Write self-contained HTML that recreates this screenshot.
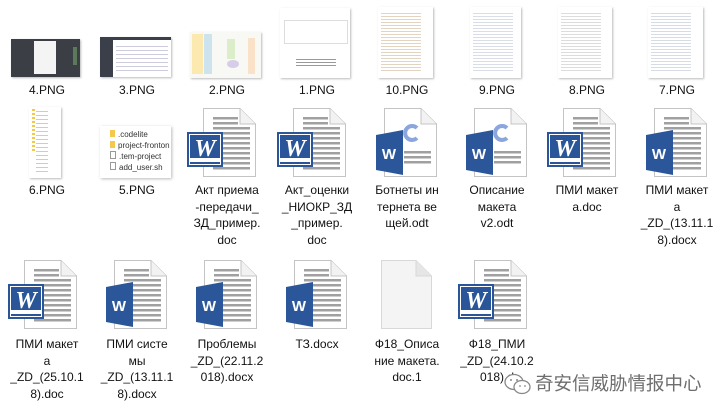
<!DOCTYPE html>
<html><head><meta charset="utf-8"><style>
body{margin:0;width:722px;height:414px;background:#fff;position:relative;overflow:hidden;font-family:"Liberation Sans","Noto Sans CJK SC",sans-serif;}
.l{position:absolute;width:92px;text-align:center;font-size:12px;line-height:16.5px;color:#111;}
.a{position:absolute;}
svg.i{position:absolute;overflow:visible;}
</style></head><body>
<svg width="0" height="0" style="position:absolute">
<defs>
<g id="paper"><path d="M0.5,0.5H37L52.5,16V68.5H0.5Z" fill="#fff" stroke="#c4c4c4"/><path d="M37,0.5V16H52.5" fill="#f2f2f2" stroke="#c4c4c4"/></g>
<g id="lines" fill="#a0a0a0"><rect x="10" y="9" width="25" height="2.5"/><rect x="10" y="14" width="25" height="2.5"/><rect x="10" y="19" width="37" height="2.5"/><rect x="10" y="24" width="37" height="2.5"/><rect x="10" y="29" width="37" height="2.5"/><rect x="10" y="34" width="37" height="2.5"/><rect x="10" y="39" width="37" height="2.5"/><rect x="10" y="44" width="37" height="2.5"/><rect x="10" y="49" width="37" height="2.5"/><rect x="10" y="54" width="37" height="2.5"/><rect x="10" y="59" width="37" height="2.5"/></g>
<g id="doc"><use href="#paper"/><use href="#lines"/><rect x="-16" y="24" width="36" height="35" fill="#2a5699"/><rect x="-13.5" y="26.5" width="31" height="30" fill="none" stroke="#fff" stroke-width="1"/><rect x="-13" y="50" width="30" height="4" fill="#fff"/><text x="2" y="48" fill="#fff" font-family="Liberation Serif,serif" font-weight="bold" font-style="italic" font-size="24" text-anchor="middle">W</text></g>
<g id="docx"><use href="#paper"/><use href="#lines"/><path d="M-8,27L19,22V67L-8,62Z" fill="#2b579a"/><text x="5" y="51" fill="#fff" font-family="Liberation Sans,sans-serif" font-weight="bold" font-size="15" text-anchor="middle">W</text></g>
<g id="odt"><use href="#paper"/><g fill="#a0a0a0"><rect x="20" y="43" width="27" height="2.5"/><rect x="20" y="48" width="27" height="2.5"/><rect x="20" y="53" width="27" height="2.5"/></g><path d="M33,20A7,7 0 1 0 33,30" fill="none" stroke="#8aa6dd" stroke-width="4"/><path d="M-8,27L19,22V67L-8,62Z" fill="#2b579a"/><text x="5" y="51" fill="#fff" font-family="Liberation Sans,sans-serif" font-weight="bold" font-size="15" text-anchor="middle">W</text></g>
</defs></svg>

<div class="a" style="left:11px;top:39px;width:69px;height:38px;background:#3b3f45;box-shadow:1px 1px 2px #bbb"><div style="position:absolute;left:23px;top:2px;width:22px;height:33px;background:#f4f4f4"></div><div style="position:absolute;left:62px;top:8px;width:4px;height:18px;background:#5a7a5a"></div></div>
<div class="a" style="left:100px;top:37px;width:71px;height:40px;background:#fff;box-shadow:1px 1px 2px #bbb"><div style="position:absolute;left:0;top:0;width:13px;height:40px;background:#3a3f4a"></div><div style="position:absolute;left:13px;top:0;width:58px;height:3px;background:#3a3f4a"></div><div style="position:absolute;left:16px;top:6px;width:52px;height:28px;background:repeating-linear-gradient(#fff 0 3px,#ccd 3px 4px)"></div></div>
<div class="a" style="left:190px;top:32px;width:71px;height:46px;background:#f8f8f4;box-shadow:1px 1px 2px #bbb"><div style="position:absolute;left:2px;top:2px;width:11px;height:40px;background:#fbe9b0"></div><div style="position:absolute;left:14px;top:2px;width:8px;height:40px;background:#cde4ef"></div><div style="position:absolute;left:58px;top:6px;width:7px;height:36px;background:#fae2c8"></div><div style="position:absolute;left:37px;top:7px;width:8px;height:20px;background:#dbeec9"></div><div style="position:absolute;left:37px;top:28px;width:12px;height:8px;border-radius:50%;background:#d8cde8"></div></div>
<div class="a" style="left:280px;top:8px;width:70px;height:70px;background:#fff;box-shadow:1px 1px 2px #bbb"><div style="position:absolute;left:4px;top:12px;width:62px;height:22px;border:1px solid #ddd"></div><div style="position:absolute;left:16px;top:50px;width:40px;height:8px;background:repeating-linear-gradient(#fff 0 1px,#999 1px 2px,#fff 2px 3px)"></div></div>
<div class="a" style="left:378px;top:7px;width:55px;height:71px;background:#fff;box-shadow:1px 1px 2px #bbb"><div style="position:absolute;left:3px;top:4px;width:40px;height:62px;background:repeating-linear-gradient(#fff 0 2px,#e2d4c0 2px 3px)"></div></div>
<div class="a" style="left:470px;top:7px;width:51px;height:71px;background:#fff;box-shadow:1px 1px 2px #bbb"><div style="position:absolute;left:3px;top:4px;width:40px;height:62px;background:repeating-linear-gradient(#fff 0 2px,#d8dde8 2px 3px)"></div></div>
<div class="a" style="left:558px;top:7px;width:54px;height:71px;background:#fff;box-shadow:1px 1px 2px #bbb"><div style="position:absolute;left:3px;top:4px;width:40px;height:62px;background:repeating-linear-gradient(#fff 0 2px,#dcdcdc 2px 3px)"></div></div>
<div class="a" style="left:648px;top:7px;width:55px;height:71px;background:#fff;box-shadow:1px 1px 2px #bbb"><div style="position:absolute;left:3px;top:4px;width:40px;height:62px;background:repeating-linear-gradient(#fff 0 2px,#d6dbe6 2px 3px)"></div></div>

<div class="l" style="left:1px;top:82px">4.PNG</div>
<div class="l" style="left:91px;top:82px">3.PNG</div>
<div class="l" style="left:181px;top:82px">2.PNG</div>
<div class="l" style="left:271px;top:82px">1.PNG</div>
<div class="l" style="left:361px;top:82px">10.PNG</div>
<div class="l" style="left:451px;top:82px">9.PNG</div>
<div class="l" style="left:541px;top:82px">8.PNG</div>
<div class="l" style="left:631px;top:82px">7.PNG</div>

<div class="a" style="left:29px;top:107px;width:32px;height:71px;background:#fff;box-shadow:1px 1px 2px #bbb"><div style="position:absolute;left:3px;top:2px;width:3px;height:42px;background:repeating-linear-gradient(#f2c94c 0 2px,#fff 2px 4px)"></div><div style="position:absolute;left:7px;top:2px;width:12px;height:66px;background:repeating-linear-gradient(#fff 0 2px,#ccc 2px 3px,#fff 3px 4px)"></div></div>
<div class="a" style="left:100px;top:126px;width:71px;height:52px;background:#fff;box-shadow:1px 1px 3px #bbb;font-size:8px;line-height:11px;color:#333">
<div style="position:absolute;left:10px;top:3px"><span style="display:inline-block;width:5px;height:7px;background:#f3c84b;margin-right:3px"></span>.codelite</div>
<div style="position:absolute;left:10px;top:14px"><span style="display:inline-block;width:5px;height:7px;background:#f3c84b;margin-right:3px"></span>project-fronton</div>
<div style="position:absolute;left:10px;top:25px"><span style="display:inline-block;width:4px;height:6px;border:1px solid #999;margin-right:3px"></span>.tem-project</div>
<div style="position:absolute;left:10px;top:36px"><span style="display:inline-block;width:4px;height:6px;border:1px solid #999;margin-right:3px"></span>add_user.sh</div></div>
<svg class="i" style="left:203px;top:108px" width="53" height="69"><use href="#doc"/></svg>
<svg class="i" style="left:293px;top:108px" width="53" height="69"><use href="#doc"/></svg>
<svg class="i" style="left:384px;top:108px" width="53" height="69"><use href="#odt"/></svg>
<svg class="i" style="left:474px;top:108px" width="53" height="69"><use href="#odt"/></svg>
<svg class="i" style="left:563px;top:108px" width="53" height="69"><use href="#doc"/></svg>
<svg class="i" style="left:654px;top:108px" width="53" height="69"><use href="#docx"/></svg>

<div class="l" style="left:1px;top:182px">6.PNG</div>
<div class="l" style="left:91px;top:182px">5.PNG</div>
<div class="l" style="left:181px;top:182px">Акт приема<br>-передачи_<br>ЗД_пример.<br>doc</div>
<div class="l" style="left:271px;top:182px">Акт_оценки<br>_НИОКР_ЗД<br>_пример.<br>doc</div>
<div class="l" style="left:361px;top:182px">Ботнеты ин<br>тернета ве<br>щей.odt</div>
<div class="l" style="left:451px;top:182px">Описание<br>макета<br>v2.odt</div>
<div class="l" style="left:541px;top:182px">ПМИ макет<br>а.doc</div>
<div class="l" style="left:631px;top:182px">ПМИ макет<br>а<br>_ZD_(13.11.1<br>8).docx</div>

<svg class="i" style="left:24px;top:260px" width="53" height="69"><use href="#doc"/></svg>
<svg class="i" style="left:114px;top:260px" width="53" height="69"><use href="#docx"/></svg>
<svg class="i" style="left:204px;top:260px" width="53" height="69"><use href="#docx"/></svg>
<svg class="i" style="left:294px;top:260px" width="53" height="69"><use href="#docx"/></svg>
<svg class="i" style="left:381px;top:260px" width="53" height="69"><path d="M0.5,0.5H35L50.5,16V68.5H0.5Z" fill="#f4f4f4" stroke="#d8d8d8"/><path d="M35,0.5V16H50.5" fill="#e6e6e6" stroke="#d8d8d8"/></svg>
<svg class="i" style="left:474px;top:260px" width="53" height="69"><use href="#doc"/></svg>

<div class="l" style="left:1px;top:336px">ПМИ макет<br>а<br>_ZD_(25.10.1<br>8).doc</div>
<div class="l" style="left:91px;top:336px">ПМИ систе<br>мы<br>_ZD_(13.11.1<br>8).docx</div>
<div class="l" style="left:181px;top:336px">Проблемы<br>_ZD_(22.11.2<br>018).docx</div>
<div class="l" style="left:271px;top:336px">ТЗ.docx</div>
<div class="l" style="left:361px;top:336px">Ф18_Описа<br>ние макета.<br>doc.1</div>
<div class="l" style="left:451px;top:336px">Ф18_ПМИ<br>_ZD_(24.10.2<br>018).d</div>

<svg class="i" style="left:503px;top:372px" width="30" height="24"><ellipse cx="11" cy="10" rx="9" ry="7.5" fill="#fff" stroke="#888" stroke-width="1.3"/><ellipse cx="19" cy="15" rx="8" ry="6.5" fill="#fff" stroke="#888" stroke-width="1.3"/><circle cx="8" cy="8" r="1" fill="#888"/><circle cx="14" cy="8" r="1" fill="#888"/><circle cx="17" cy="14" r="0.9" fill="#888"/><circle cx="22" cy="14" r="0.9" fill="#888"/></svg>
<div class="a" style="left:535px;top:371px;font-size:18.5px;color:#6e6e6e;font-family:'Noto Sans CJK SC',sans-serif;line-height:24px">奇安信威胁情报中心</div>
</body></html>
